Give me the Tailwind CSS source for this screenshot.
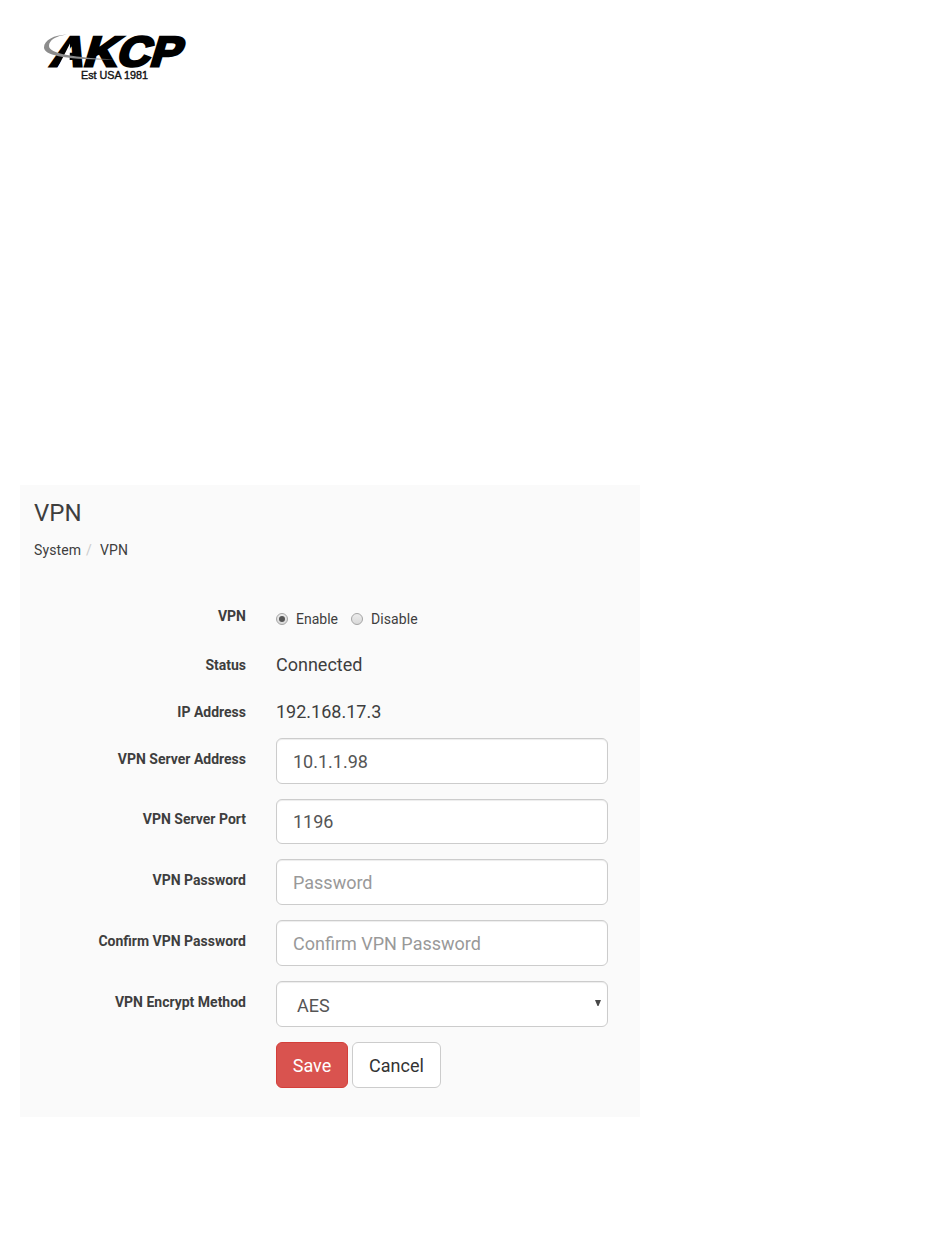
<!DOCTYPE html>
<html lang="en">
<head>
<meta charset="utf-8">
<title>VPN</title>
<script src="https://cdn.jsdelivr.net/npm/@tailwindcss/browser@4"></script>
</head>
<body class="bg-white font-['Roboto',sans-serif] text-[#3e3e3e] h-[1254px] overflow-hidden">
<header class="h-[485px] pl-[36px] pt-[26px]">
  <svg class="block" width="160" height="60" viewBox="0 0 160 60" role="img" aria-label="AKCP Est USA 1981">
    <g transform="translate(13 39.8) skewX(-17)">
      <text x="0" y="0" font-family="Liberation Sans, sans-serif" font-weight="700" font-size="42" textLength="130" lengthAdjust="spacingAndGlyphs" fill="#000" stroke="#000" stroke-width="2.8">AKCP</text>
    </g>
    <path d="M34 17.500L33.500 42H21.500Z" fill="#fff"/>
    <path d="M31 8.500C18 9 8 14 8 21.500C8 29 28 34 78 33.500C40 31.500 13 28 13 20C13 14 20 10 31 8.500Z" fill="#8c8c8c"/>
    <text x="45" y="53" font-family="Liberation Sans, sans-serif" font-size="11" textLength="67" lengthAdjust="spacingAndGlyphs" fill="#111" stroke="#111" stroke-width=".4">Est USA 1981</text>
  </svg>
</header>
<main class="ml-5 w-[620px] h-[632px] bg-[#fafafa] px-[14px] pt-[13px]">
  <h1 class="text-[24px] leading-[30px]">VPN</h1>
  <nav class="flex mt-3 text-[14px] leading-5 tracking-[0.1px]"><span>System</span><span class="w-[19px] pl-[5px] text-[#ccc]">/</span><span>VPN</span></nav>
  <form class="grid grid-cols-[212px_332px] gap-x-[30px] mt-[39px] text-[18px]">
    <div class="h-[49px] pt-[7px] text-right text-[14px] leading-5 font-bold">VPN</div>
    <div class="flex items-center h-5 mt-[10px] text-[14px]">
      <svg width="12" height="12" viewBox="0 0 12 12"><defs><linearGradient id="g" x2="0" y2="1"><stop stop-color="#ededed"/><stop offset="1" stop-color="#d8d8d8"/></linearGradient></defs><circle cx="6" cy="6" r="5.500" fill="url(#g)" stroke="#a5a5a5"/><circle cx="6" cy="6" r="3" fill="#555"/></svg>
      <span class="ml-2 w-[55px]">Enable</span>
      <svg width="12" height="12" viewBox="0 0 12 12"><circle cx="6" cy="6" r="5.500" fill="url(#g)" stroke="#a5a5a5"/></svg>
      <span class="ml-2 tracking-[0.1px]">Disable</span>
    </div>
    <div class="h-[47px] pt-[7px] text-right text-[14px] leading-5 font-bold">Status</div>
    <div class="pt-[5px] leading-6">Connected</div>
    <div class="h-[43px] pt-[7px] text-right text-[14px] leading-5 font-bold">IP Address</div>
    <div class="pt-[5px] leading-6">192.168.17.3</div>

    <div class="h-[61px] pt-[11px] text-right text-[14px] leading-5 font-bold">VPN Server Address</div>
    <input class="w-full h-[46px] bg-white border border-[#ccc] rounded-md px-4 pt-px text-[#555] shadow-[inset_0_1px_1px_rgba(0,0,0,0.075)]" value="10.1.1.98">
    <div class="h-[60px] pt-[10px] text-right text-[14px] leading-5 font-bold">VPN Server Port</div>
    <input class="w-full h-[45px] bg-white border border-[#ccc] rounded-md px-4 text-[#555] shadow-[inset_0_1px_1px_rgba(0,0,0,0.075)]" value="1196">
    <div class="h-[61px] pt-[11px] text-right text-[14px] leading-5 font-bold">VPN Password</div>
    <input class="w-full h-[46px] bg-white border border-[#ccc] rounded-md px-4 pt-px placeholder:text-[#999] shadow-[inset_0_1px_1px_rgba(0,0,0,0.075)]" placeholder="Password">
    <div class="h-[61px] pt-[11px] text-right text-[14px] leading-5 font-bold">Confirm VPN Password</div>
    <input class="w-full h-[46px] bg-white border border-[#ccc] rounded-md px-4 pt-px placeholder:text-[#999] shadow-[inset_0_1px_1px_rgba(0,0,0,0.075)]" placeholder="Confirm VPN Password">
    <div class="h-[61px] pt-[11px] text-right text-[14px] leading-5 font-bold">VPN Encrypt Method</div>
    <div class="flex items-center justify-between h-[46px] bg-white border border-[#ccc] rounded-md pl-5 pr-[6px] pt-[3px] text-[#555] shadow-[inset_0_1px_1px_rgba(0,0,0,0.075)]"><span>AES</span><svg class="-mt-[5px]" width="6" height="6" viewBox="0 0 6 6"><path d="M0 0H6L3.500 6H2.500Z" fill="#484848"/></svg></div>
    <div class="col-start-2 flex gap-1">
      <button type="button" class="w-[72px] h-[46px] rounded-md border border-[#d43f3a] bg-[#d9534f] text-white pt-px">Save</button>
      <button type="button" class="w-[89px] h-[46px] rounded-md border border-[#ccc] bg-white text-[#333] pt-px">Cancel</button>
    </div>
  </form>
</main>
</body>
</html>
